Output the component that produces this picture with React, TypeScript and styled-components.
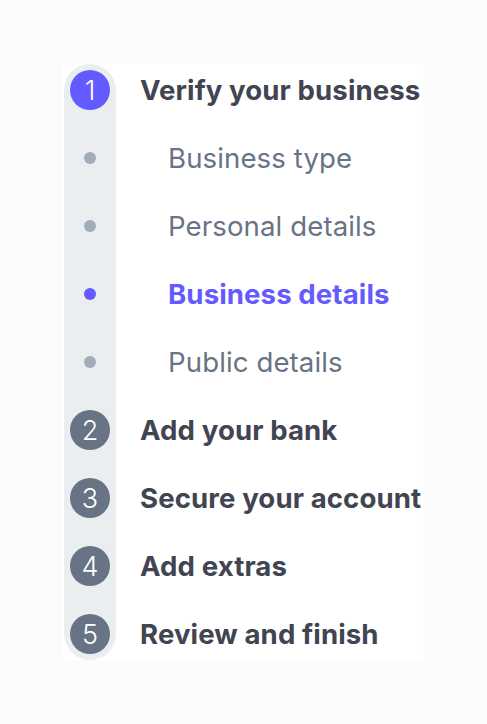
import React from "react";
import styled, { createGlobalStyle } from "styled-components";

const GlobalStyle = createGlobalStyle`
  html, body {
    margin: 0;
    padding: 0;
    background: #fcfcfd;
  }
  body {
    font-family: Inter, "Noto Sans", sans-serif;
    -webkit-font-smoothing: antialiased;
  }
`;

type Step = {
  label: string;
  kind: "step" | "sub";
  number?: number;
  active?: boolean;
};

const steps: Step[] = [
  { label: "Verify your business", kind: "step", number: 1, active: true },
  { label: "Business type", kind: "sub" },
  { label: "Personal details", kind: "sub" },
  { label: "Business details", kind: "sub", active: true },
  { label: "Public details", kind: "sub" },
  { label: "Add your bank", kind: "step", number: 2 },
  { label: "Secure your account", kind: "step", number: 3 },
  { label: "Add extras", kind: "step", number: 4 },
  { label: "Review and finish", kind: "step", number: 5 },
];

export default function App() {
  return (
    <>
      <GlobalStyle />
      <Page>
        <Panel>
          <Nav>
            <Track />
            {steps.map((s) => (
              <Row key={s.label}>
                <Marker>
                  {s.kind === "step" ? (
                    <Badge $active={s.active}>{s.number}</Badge>
                  ) : (
                    <Dot $active={s.active} />
                  )}
                </Marker>
                {s.kind === "step" ? (
                  <StepLabel>{s.label}</StepLabel>
                ) : (
                  <SubLabel $active={s.active}>{s.label}</SubLabel>
                )}
              </Row>
            ))}
          </Nav>
        </Panel>
      </Page>
    </>
  );
}

const Page = styled.div`
  width: 487px;
  height: 724px;
  padding: 64px 0 0 62px;
  box-sizing: border-box;
`;

const Panel = styled.div`
  display: flow-root;
  width: 361px;
  height: 596px;
  background: #ffffff;
  padding-left: 2px;
  box-sizing: border-box;
`;

/* rows are 68px tall; the track hugs the first and last badge */
const Nav = styled.div`
  position: relative;
  display: flex;
  flex-direction: column;
  margin-top: -8px;
`;

const Track = styled.div`
  position: absolute;
  left: 0;
  top: 8px;
  width: 52px;
  bottom: 8px;
  border-radius: 26px;
  background: #ebeef1;
`;

const Row = styled.div`
  position: relative;
  display: flex;
  align-items: center;
  height: 68px;
  white-space: nowrap;
`;

const Marker = styled.div`
  width: 52px;
  display: flex;
  align-items: center;
  justify-content: center;
  flex-shrink: 0;
`;

const Badge = styled.div<{ $active?: boolean }>`
  width: 40px;
  height: 40px;
  border-radius: 50%;
  background: ${(p) => (p.$active ? "#635bff" : "#687385")};
  color: #ffffff;
  font-size: 27px;
  font-weight: 300;
  display: flex;
  align-items: center;
  justify-content: center;
  line-height: 1;
`;

const Dot = styled.div<{ $active?: boolean }>`
  width: 12px;
  height: 12px;
  border-radius: 50%;
  background: ${(p) => (p.$active ? "#635bff" : "#a3acba")};
`;

const StepLabel = styled.span`
  margin-left: 24px;
  font-size: 27.6px;
  font-weight: 700;
  letter-spacing: 0.1px;
  color: #414552;
`;

const SubLabel = styled.span<{ $active?: boolean }>`
  margin-left: 52px;
  font-size: 27.6px;
  font-weight: ${(p) => (p.$active ? 700 : 400)};
  letter-spacing: 0.1px;
  color: ${(p) => (p.$active ? "#635bff" : "#687385")};
`;
